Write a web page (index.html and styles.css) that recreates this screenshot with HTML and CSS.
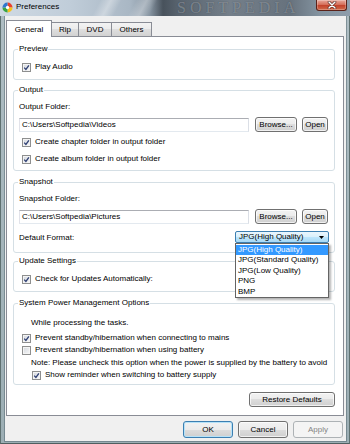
FILE: index.html
```html
<!DOCTYPE html>
<html lang="en">
<head>
    <meta charset="UTF-8">
    <meta name="viewport" content="width=device-width, initial-scale=1.0">
    <title>Preferences</title>
    <link rel="stylesheet" href="styles.css">
</head>
<body>

<div class="window">
    <div class="titlebar">
        <svg class="app-icon" viewBox="0 0 12 12" width="11" height="11">
            <path d="M6 6 L6 0.5 A5.5 5.5 0 0 1 11.5 6 Z" fill="#e8412c"/>
            <path d="M6 6 L11.5 6 A5.5 5.5 0 0 1 6 11.5 Z" fill="#f6c21c"/>
            <path d="M6 6 L6 11.5 A5.5 5.5 0 0 1 0.5 6 Z" fill="#3aa545"/>
            <path d="M6 6 L0.5 6 A5.5 5.5 0 0 1 6 0.5 Z" fill="#2f78d0"/>
            <circle cx="6" cy="6" r="1.8" fill="#fff"/>
        </svg>
        <span class="title">Preferences</span>
        <span class="watermark">SOFTPEDIA</span>
        <div class="close-btn">
            <svg viewBox="0 0 10 8" width="10" height="8">
                <path d="M2 1 L8 7 M8 1 L2 7" stroke="#4a1a14" stroke-width="2.6" stroke-linecap="round"/>
                <path d="M2 1 L8 7 M8 1 L2 7" stroke="#fff" stroke-width="1.5" stroke-linecap="round"/>
            </svg>
        </div>
    </div>

    <div class="frame">
        <div class="client">
            <div class="tabs">
                <div class="tab active tab-general">General</div>
                <div class="tab tab-rip">Rip</div>
                <div class="tab tab-dvd">DVD</div>
                <div class="tab tab-others">Others</div>
            </div>

            <div class="page">
                <fieldset class="group group-preview">
                    <legend>Preview</legend>
                    <div class="row check first-8">
                        <span class="box checked"><svg viewBox="0 0 7 7"><path d="M1.2 3.6 L2.9 5.4 L5.9 1.3"/></svg></span>
                        Play Audio
                    </div>
                </fieldset>

                <fieldset class="group group-output">
                    <legend>Output</legend>
                    <div class="row first-7">Output Folder:</div>
                    <div class="path-row">
                        <div class="textbox">C:\Users\Softpedia\Videos</div>
                        <button class="btn browse">Browse...</button>
                        <button class="btn open">Open</button>
                    </div>
                    <div class="row check gap-5">
                        <span class="box checked"><svg viewBox="0 0 7 7"><path d="M1.2 3.6 L2.9 5.4 L5.9 1.3"/></svg></span>
                        Create chapter folder in output folder
                    </div>
                    <div class="row check gap-7">
                        <span class="box checked"><svg viewBox="0 0 7 7"><path d="M1.2 3.6 L2.9 5.4 L5.9 1.3"/></svg></span>
                        Create album folder in output folder
                    </div>
                </fieldset>

                <fieldset class="group group-snapshot">
                    <legend>Snapshot</legend>
                    <div class="row first-7">Snapshot Folder:</div>
                    <div class="path-row">
                        <div class="textbox">C:\Users\Softpedia\Pictures</div>
                        <button class="btn browse">Browse...</button>
                        <button class="btn open">Open</button>
                    </div>
                    <div class="format-row">
                        <span>Default Format:</span>
                        <div class="combo">
                            <span>JPG(High Quality)</span>
                            <svg class="combo-arrow" viewBox="0 0 5 3" width="5" height="3"><path d="M0 0 H5 L2.5 3 Z" fill="#000"/></svg>
                            <ul class="combo-list">
                                <li class="selected">JPG(High Quality)</li>
                                <li>JPG(Standard Quality)</li>
                                <li>JPG(Low Quality)</li>
                                <li>PNG</li>
                                <li>BMP</li>
                            </ul>
                        </div>
                    </div>
                </fieldset>

                <fieldset class="group group-update">
                    <legend>Update Settings</legend>
                    <div class="row check first-8">
                        <span class="box checked"><svg viewBox="0 0 7 7"><path d="M1.2 3.6 L2.9 5.4 L5.9 1.3"/></svg></span>
                        Check for Updates Automatically:
                    </div>
                </fieldset>

                <fieldset class="group group-power">
                    <legend>System Power Management Options</legend>
                    <div class="row indent first-10">While processing the tasks.</div>
                    <div class="row check gap-5">
                        <span class="box checked"><svg viewBox="0 0 7 7"><path d="M1.2 3.6 L2.9 5.4 L5.9 1.3"/></svg></span>
                        Prevent standby/hibernation when connecting to mains
                    </div>
                    <div class="row check gap-2">
                        <span class="box"></span>
                        Prevent standby/hibernation when using battery
                    </div>
                    <div class="row indent gap-3">Note: Please uncheck this option when the power is supplied by the battery to avoid</div>
                    <div class="row check sub gap-2">
                        <span class="box checked"><svg viewBox="0 0 7 7"><path d="M1.2 3.6 L2.9 5.4 L5.9 1.3"/></svg></span>
                        Show reminder when switching to battery supply
                    </div>
                </fieldset>

                <div class="restore-row">
                    <button class="btn restore">Restore Defaults</button>
                </div>
            </div>

            <div class="footer">
                <button class="btn dlg default">OK</button>
                <button class="btn dlg">Cancel</button>
                <button class="btn dlg" disabled>Apply</button>
            </div>
        </div>
    </div>
</div>

</body>
</html>
```

FILE: styles.css
```css
* {
    box-sizing: border-box;
}

body {
    margin: 0;
    font-family: "Liberation Sans", Arial, sans-serif;
    font-size: 8px;
    color: #000;
    background: #8fa2ab;
}

.window {
    width: 350px;
    height: 444px;
    display: flex;
    flex-direction: column;
    overflow: hidden;
}

/* Title bar (aero glass) */
.titlebar {
    height: 16px;
    flex: none;
    display: flex;
    align-items: flex-start;
    position: relative;
    padding: 2px 0 0 2px;
    background:
        linear-gradient(118deg, transparent 0 28%, rgba(255,255,255,0.35) 31%, transparent 34%, transparent 38%, rgba(255,255,255,0.3) 41%, transparent 44%),
        linear-gradient(to right, #cfd9e3 0, #c0cdd9 70px, #a9b7c4 130px, #8593a0 150px, #48525c 163px, #58636e 178px, #747f8a 230px, #67727d 290px, #8494a1 320px, #8e9dab 350px);
}

.app-icon {
    flex: none;
}

.title {
    margin-left: 3px;
    line-height: 10px;
}

.watermark {
    position: absolute;
    left: 177px;
    top: 0;
    font-family: "Liberation Serif", serif;
    font-size: 16px;
    line-height: 15px;
    letter-spacing: 4px;
    color: rgba(235, 240, 245, 0.35);
    text-shadow: 0 0 1px rgba(30, 40, 50, 0.6);
}

.close-btn {
    margin: -2px 3px 0 auto;
    width: 31px;
    height: 11px;
    position: relative;
    border: 1px solid #5b2219;
    border-top: none;
    border-radius: 0 0 3px 3px;
    background: linear-gradient(#e9a99c 0, #d5705c 45%, #c3442d 55%, #d06a4a 100%);
    box-shadow: inset 0 0 0 1px rgba(255,255,255,0.25);
    display: flex;
    align-items: center;
    justify-content: center;
}

/* Frame around the client area */
.frame {
    flex: 1;
    display: flex;
    padding: 0 3px 2px 4px;
    border-left: 1px solid #5f7171;
    border-right: 1px solid #5f7171;
    border-bottom: 1px solid #4f5f60;
    background: linear-gradient(#aebdc3, #9caeb4);
}

.client {
    flex: 1;
    background: #f0f0f0;
    display: flex;
    flex-direction: column;
    box-shadow: 0 0 0 1px rgba(70, 90, 100, 0.45);
}

/* Tabs */
.tabs {
    height: 20px;
    display: flex;
    align-items: flex-end;
    padding-left: 1px;
}

.tab {
    height: 14px;
    border: 1px solid #898c95;
    border-bottom: none;
    margin-right: -1px;
    background: linear-gradient(#f3f3f3 0, #ebebeb 50%, #dedede 50%, #d2d2d2 100%);
    display: flex;
    align-items: center;
    justify-content: center;
}

.tab.active {
    height: 17px;
    margin-bottom: -1px;
    background: #fff;
    position: relative;
    z-index: 1;
}

.tab-general { width: 46px; }
.tab-rip { width: 28px; }
.tab-dvd { width: 34px; }
.tab-others { width: 41px; }

/* Tab page */
.page {
    height: 380px;
    margin: 0 2px 0 1px;
    background: #fff;
    border: 1px solid #898c95;
    padding: 7px 8px 0 6px;
    display: flex;
    flex-direction: column;
}

.group {
    margin: 0;
    min-width: 0;
    border: 1px solid #d5dfe5;
    border-radius: 3px;
    padding: 0 6px 0 5px;
}

.group legend {
    padding: 0 1px;
    margin-left: -1px;
    height: 10px;
    line-height: 10px;
}

.group-preview { padding-bottom: 7px; }
.group-output { margin-top: 5px; padding-bottom: 6px; }
.group-snapshot { margin-top: 6px; padding-bottom: 9px; }
.group-update { margin-top: 3px; padding-bottom: 7px; }
.group-power { margin-top: 6px; padding-bottom: 4px; }

.row {
    height: 10px;
    line-height: 10px;
    display: flex;
    align-items: center;
    white-space: nowrap;
}

.first-7 { margin-top: 7px; }
.first-8 { margin-top: 8px; }
.first-10 { margin-top: 10px; }
.gap-2 { margin-top: 2px; }
.gap-3 { margin-top: 3px; }
.gap-5 { margin-top: 5px; }
.gap-7 { margin-top: 7px; }

.check {
    margin-left: 3px;
}

.check.sub {
    margin-left: 13px;
}

.indent {
    margin-left: 12px;
}

.box {
    width: 9px;
    height: 9px;
    flex: none;
    margin-right: 4px;
    border: 1px solid #8e8f8f;
    background: linear-gradient(135deg, #d3d7dd, #f8f8f8);
    box-shadow: inset 0 0 0 1px #f4f4f4;
    display: flex;
}

.box svg {
    width: 7px;
    height: 7px;
}

.box svg path {
    fill: none;
    stroke: #2e3f73;
    stroke-width: 1.3;
}

/* Folder rows */
.path-row {
    margin-top: 5px;
    height: 15px;
    display: flex;
    align-items: center;
}

.textbox {
    width: 230px;
    height: 14px;
    border: 1px solid;
    border-color: #abadb3 #dbdfe6 #e3e9ef #e2e3ea;
    padding-left: 2px;
    line-height: 12px;
    white-space: nowrap;
}

.btn {
    font-family: inherit;
    font-size: 8px;
    color: #000;
    padding: 0;
    border: 1px solid #707070;
    border-radius: 3px;
    background: linear-gradient(#f2f2f2 0, #ebebeb 50%, #dddddd 50%, #cfcfcf 100%);
    box-shadow: inset 0 0 0 1px rgba(255, 255, 255, 0.7);
}

.browse {
    width: 42px;
    height: 15px;
    margin-left: 6px;
}

.open {
    width: 26px;
    height: 15px;
    margin-left: 5px;
}

/* Default format combo */
.format-row {
    margin-top: 7px;
    height: 12px;
    display: flex;
    align-items: center;
}

.combo {
    position: relative;
    width: 94px;
    height: 12px;
    margin: 0 -1px 0 auto;
    padding-left: 3px;
    border: 1px solid #3c7fb1;
    border-radius: 2px;
    background: linear-gradient(#eaf6fd 0, #d9f0fc 50%, #bee6fd 50%, #a7d9f5 100%);
    display: flex;
    align-items: center;
    line-height: 10px;
}

.combo-arrow {
    margin: 0 4px 0 auto;
}

.combo-list {
    position: absolute;
    z-index: 5;
    top: 11px;
    left: -1px;
    width: 94px;
    margin: 0;
    padding: 1px 0 0;
    list-style: none;
    background: #fff;
    border: 1px solid #646464;
    box-shadow: 2px 2px 2px rgba(0, 0, 0, 0.3);
}

.combo-list li {
    height: 10.4px;
    line-height: 10.4px;
    padding-left: 2px;
    white-space: nowrap;
}

.combo-list li.selected {
    background: #3399ff;
    color: #fff;
}

/* Bottom buttons */
.restore-row {
    margin-top: 7px;
    display: flex;
    justify-content: flex-end;
}

.restore {
    width: 86px;
    height: 15px;
}

.footer {
    flex: 1;
    display: flex;
    justify-content: flex-end;
    gap: 5px;
    padding: 5px 3px 0 0;
}

.dlg {
    width: 50px;
    height: 17px;
}

.dlg.default {
    border-color: #3c7fb1;
    box-shadow: inset 0 0 0 1px #b6e2f8;
}

.dlg:disabled {
    color: #838383;
    border-color: #adb2b5;
    background: #f4f4f4;
    box-shadow: none;
}
```
